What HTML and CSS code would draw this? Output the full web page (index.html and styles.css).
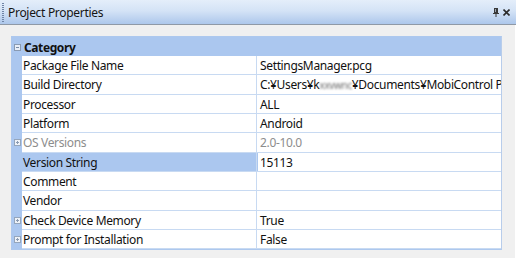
FILE: index.html
```html
<!DOCTYPE html>
<html>
<head>
<meta charset="utf-8">
<link rel="stylesheet" href="styles.css">
</head>
<body>
<div class="panel">
  <div class="titlebar">
    <span class="grip"></span>
    <span class="title">Project Properties</span>
    <span class="tools">
      <svg class="pin" width="6" height="9" viewBox="0 0 6 9"><rect x="1" y="0" width="4" height="5" fill="#3a3a3a"/><rect x="2" y="1" width="1" height="3" fill="#9aa4b0"/><rect x="0" y="5" width="6" height="1" fill="#3a3a3a"/><rect x="2.5" y="6" width="1" height="3" fill="#3a3a3a"/></svg>
      <svg class="close" width="7" height="7" viewBox="0 0 7 7"><path d="M0.5 0.5 L6.5 6.5 M6.5 0.5 L0.5 6.5" stroke="#2a2a2a" stroke-width="1.6"/></svg>
    </span>
  </div>
  <div class="body">
    <div class="grid">
      <div class="cat"><span class="exp"><span class="minus">−</span></span><span class="cat-label">Category</span></div>
      <div class="row"><span class="gut"></span><span class="name">Package File Name</span><span class="val">SettingsManager.pcg</span></div>
      <div class="row"><span class="gut"></span><span class="name">Build Directory</span><span class="val">C:¥Users¥k<span class="blur">xxvwnc</span>¥Documents¥MobiControl Package</span></div>
      <div class="row"><span class="gut"></span><span class="name">Processor</span><span class="val">ALL</span></div>
      <div class="row"><span class="gut"></span><span class="name">Platform</span><span class="val">Android</span></div>
      <div class="row dim"><span class="gut"><span class="plus">+</span></span><span class="name">OS Versions</span><span class="val">2.0-10.0</span></div>
      <div class="row sel"><span class="gut"></span><span class="name">Version String</span><span class="val">15113</span></div>
      <div class="row"><span class="gut"></span><span class="name">Comment</span><span class="val"></span></div>
      <div class="row"><span class="gut"></span><span class="name">Vendor</span><span class="val"></span></div>
      <div class="row"><span class="gut"><span class="plus">+</span></span><span class="name">Check Device Memory</span><span class="val">True</span></div>
      <div class="row"><span class="gut"><span class="plus">+</span></span><span class="name">Prompt for Installation</span><span class="val">False</span></div>
    </div>
  </div>
</div>
</body>
</html>
```
FILE: styles.css
```css
* { box-sizing: border-box; }
html, body { margin: 0; padding: 0; }
body {
  width: 516px;
  height: 258px;
  overflow: hidden;
  background: #f0f0f0;
  font-family: "Noto Sans", "Open Sans", sans-serif;
  font-size: 12px;
  letter-spacing: -0.35px;
  color: #111;
}
.panel { width: 516px; height: 258px; display: flex; flex-direction: column; }
.titlebar {
  height: 25px;
  flex: none;
  display: flex;
  align-items: center;
  background: linear-gradient(#e4eefa, #d4e3f6 45%, #adc7eb);
  border-bottom: 1px solid #8f99a6;
  padding-left: 2px;
  padding-right: 6px;
}
.grip {
  width: 2px;
  height: 19px;
  background: repeating-linear-gradient(#6f84a6 0 1px, transparent 1px 2px);
  margin-right: 4px;
}
.title { font-size: 12px; letter-spacing: -0.3px; color: #151515; flex: 1; }
.tools { display: flex; align-items: center; gap: 4px; }
.pin { display: block; }
.close { display: block; }
.body {
  flex: 1;
  padding: 11px 13px 0 11px;
  border-right: 1px solid #ffffff;
}
.grid {
  border: 1px solid #adc8ee;
  border-right-color: #b8cdeb;
  background: #f0f0f0;
}
.cat {
  height: 19px;
  background: #abc7ef;
  display: flex;
  align-items: center;
  font-weight: bold;
  font-size: 12px;
  letter-spacing: -0.4px;
  padding-top: 1px;
}
.exp { width: 11px; display: flex; justify-content: center; }
.minus {
  width: 7px; height: 7px;
  border: 1px solid #8a9bb3;
  font-size: 0;
  background:
    linear-gradient(#7a8ca6, #7a8ca6) center/3px 1px no-repeat,
    #e8eef8;
}
.cat-label { padding-left: 1px; }
.row {
  display: grid;
  grid-template-columns: 10px 235px 1fr;
  height: 19.33px;
}
.gut { background: #abc7ef; display: flex; align-items: center; justify-content: center; }
.plus {
  width: 7px; height: 7px;
  border: 1px solid #95a6bc;
  font-size: 0;
  background:
    linear-gradient(#8a9bb3, #8a9bb3) center/3px 1px no-repeat,
    linear-gradient(#8a9bb3, #8a9bb3) center/1px 3px no-repeat,
    #eef2f8;
}
.name, .val {
  background: #fff;
  border-bottom: 1px solid #c8daf2;
  white-space: nowrap;
  overflow: hidden;
  line-height: 18px;
  padding-top: 1px;
}
.name { border-right: 1px solid #c8daf2; padding-left: 1px; }
.val { padding-left: 3px; }
.dim .name, .dim .val { color: #8d8d8d; }
.sel .name { background: #abc7ef; }
.sel .val { box-shadow: inset 1px 0 0 #abc7ef; }
.blur { filter: blur(1.2px); color: #6a6a6a; font-size: 10px; }
```
